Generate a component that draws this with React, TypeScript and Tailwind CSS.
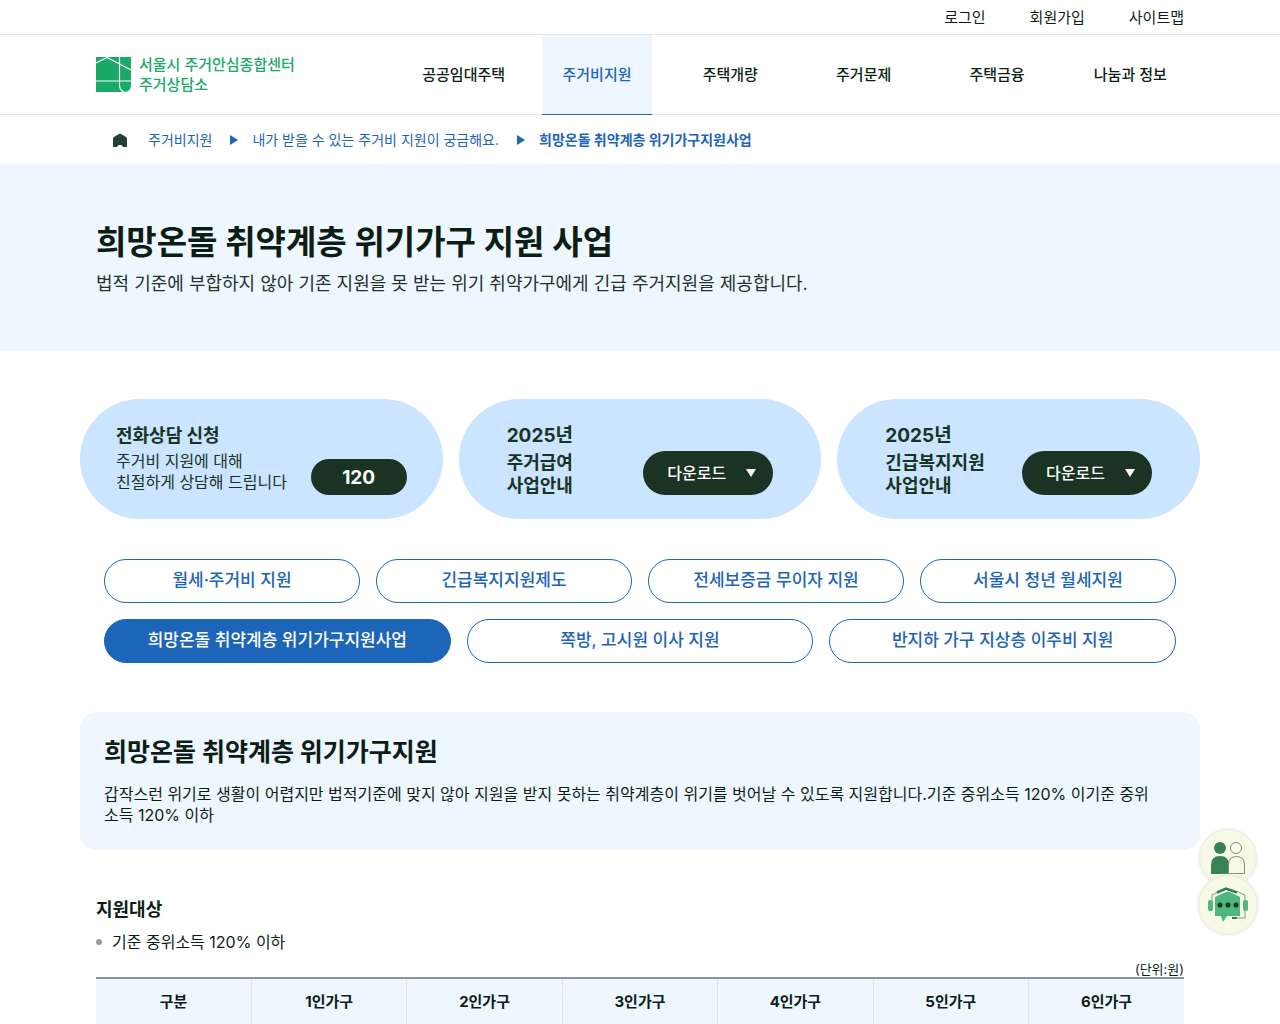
import React from "react";

const nav = [
  { label: "공공임대주택", active: false },
  { label: "주거비지원", active: true },
  { label: "주택개량", active: false },
  { label: "주거문제", active: false },
  { label: "주택금융", active: false },
  { label: "나눔과 정보", active: false },
];
const guides = ["주거급여", "긴급복지지원"];
const topics = ["월세·주거비 지원", "긴급복지지원제도", "전세보증금 무이자 지원", "서울시 청년 월세지원"];
const moreTopics = ["희망온돌 취약계층 위기가구지원사업", "쪽방, 고시원 이사 지원", "반지하 가구 지상층 이주비 지원"];
const columns = ["구분", "1인가구", "2인가구", "3인가구", "4인가구", "5인가구", "6인가구"];

function Logo() {
  return (
    <svg width="35" height="35" viewBox="0 0 35 35" aria-hidden="true">
      <path d="M0 0H35V28Q35 35 28 35H0Z" fill="#1aa968" />
      <path d="M0 6L11 0.5L35 13M23.5 0V28Q23.5 33 28 35M0 24H35" fill="none" stroke="#fff" strokeWidth="1.2" />
    </svg>
  );
}

function Arrow() {
  return (
    <svg width="8" height="10" viewBox="0 0 8 10" aria-hidden="true">
      <path d="M0 0L8 5L0 10Z" fill="#1d65b8" />
    </svg>
  );
}

function Topic({ label, active = false }: { label: string; active?: boolean }) {
  return (
    <a
      href="#topic"
      className={
        "flex h-11 items-center justify-center rounded-full border border-[#1d65b8] text-[17px] font-medium " +
        (active ? "bg-[#1d65b8] text-white" : "bg-white text-[#1d65b8]")
      }
    >
      {label}
    </a>
  );
}

export default function App() {
  return (
    <div className="bg-white font-[Inter,'Noto_Sans_CJK_KR',sans-serif] text-[#0c1e14]">
      <header>
        <div className="border-b border-[#e4e7ea]">
          <div className="mx-auto flex h-[34px] max-w-[1120px] items-center justify-end gap-11 px-4 pt-[2px] text-[15px]">
            <a href="#login">로그인</a>
            <a href="#join">회원가입</a>
            <a href="#sitemap">사이트맵</a>
          </div>
        </div>
        <div className="border-b border-[#e4e7ea]">
          <div className="mx-auto flex h-[79px] max-w-[1120px] items-center justify-between pr-[3px] pl-4">
            <a href="#home" className="flex items-center gap-2 text-[15px] leading-5 font-medium text-[#1aa968]">
              <Logo />
              <span>
                서울시 주거안심종합센터
                <br />
                주거상담소
              </span>
            </a>
            <nav className="grid h-full w-[800px] grid-cols-6">
              {nav.map((n) => (
                <a
                  key={n.label}
                  href="#menu"
                  className={
                    "-mb-px flex items-center justify-center justify-self-center border-b px-5 pt-[2px] text-[15px] font-medium " +
                    (n.active ? "border-[#1d65b8] bg-[#eef6ff] text-[#1d65b8]" : "border-transparent")
                  }
                >
                  {n.label}
                </a>
              ))}
            </nav>
          </div>
        </div>
      </header>

      <nav aria-label="현재 위치" className="mx-auto flex h-[49px] max-w-[1120px] items-center px-8 text-[14px] text-[#1d65b8]">
        <a href="#home" aria-label="홈" className="mr-5">
          <svg width="16" height="16" viewBox="0 0 16 16" aria-hidden="true">
            <path d="M1 6.5Q1 5.5 2 5L7 2Q8 1.5 9 2L14 5Q15 5.500 15 6.500V15H11L9.500 13H6.500L5 15H1Z" fill="#1f4030" />
          </svg>
        </a>
        <a href="#support">주거비지원</a>
        <span className="mr-[14px] ml-[18px]"><Arrow /></span>
        <a href="#guide">내가 받을 수 있는 주거비 지원이 궁금해요.</a>
        <span className="mr-[14px] ml-[18px]"><Arrow /></span>
        <a href="#current" aria-current="page" className="font-bold">희망온돌 취약계층 위기가구지원사업</a>
      </nav>

      <main>
        <div className="bg-[#eef6ff]">
          <div className="mx-auto flex h-[187px] max-w-[1120px] flex-col justify-center px-4 pt-1">
            <h1 className="text-[33px] leading-[48px] font-bold">희망온돌 취약계층 위기가구 지원 사업</h1>
            <p className="text-[18px] leading-9 text-[#23332a]">
              법적 기준에 부합하지 않아 기존 지원을 못 받는 위기 취약가구에게 긴급 주거지원을 제공합니다.
            </p>
          </div>
        </div>

        <div className="mx-auto max-w-[1120px] pt-12">
          <div className="grid grid-cols-3 gap-4">
            <section className="flex h-[120px] items-end justify-between rounded-full bg-[#cbe4ff] px-9 pb-6 text-[#18331f]">
              <div className="pb-[2px]">
                <h2 className="text-[18px] leading-[30px] font-bold">전화상담 신청</h2>
                <p className="text-[16px] leading-[21px]">
                  주거비 지원에 대해
                  <br />
                  친절하게 상담해 드립니다
                </p>
              </div>
              <button type="button" className="h-9 w-24 shrink-0 rounded-full bg-[#1b3322] text-[19px] leading-none font-bold text-white">
                120
              </button>
            </section>
            {guides.map((g) => (
              <section key={g} className="flex h-[120px] items-end justify-between rounded-full bg-[#cbe4ff] px-12 pb-6 text-[#18331f]">
                <h2 className="-mb-[2px] text-[18px] leading-[23px] font-bold">
                  <span className="block text-[19px] leading-[30px]">2025년</span>
                  {g}
                  <br />
                  사업안내
                </h2>
                <button type="button" className="flex h-11 w-[130px] shrink-0 items-center justify-between rounded-full bg-[#1b3322] pr-4 pl-6 text-[16px] font-medium text-white">
                  다운로드
                  <svg width="12" height="8" viewBox="0 0 12 8" aria-hidden="true">
                    <path d="M1 0H11L6 8Z" fill="#fff" />
                  </svg>
                </button>
              </section>
            ))}
          </div>

          <div className="mt-10 flex flex-col gap-4 px-6">
            <div className="grid grid-cols-4 gap-4">
              {topics.map((t) => <Topic key={t} label={t} />)}
            </div>
            <div className="grid grid-cols-3 gap-4">
              {moreTopics.map((t, i) => <Topic key={t} label={t} active={i === 0} />)}
            </div>
          </div>

          <section className="mt-[49px] rounded-2xl bg-[#eef6ff] pt-5 pr-10 pb-6 pl-6">
            <h2 className="text-[25px] leading-10 font-bold">희망온돌 취약계층 위기가구지원</h2>
            <p className="mt-3 text-[16px] leading-[21px]">
              갑작스런 위기로 생활이 어렵지만 법적기준에 맞지 않아 지원을 받지 못하는 취약계층이 위기를 벗어날 수 있도록 지원합니다.기준 중위소득 120% 이기준 중위소득 120% 이하
            </p>
          </section>

          <section className="mt-11 px-4">
            <h3 className="text-[18px] leading-8 font-bold">지원대상</h3>
            <ul className="mb-[3px]">
              <li className="flex items-center gap-[10px] text-[16px] leading-8">
                <span className="size-[6px] rounded-full bg-[#9a9a9a]" />
                기준 중위소득 120% 이하
              </li>
            </ul>
            <table className="w-full table-fixed border-collapse">
              <caption className="text-right text-[13px] leading-4">(단위:원)</caption>
              <thead>
                <tr>
                  {columns.map((c) => (
                    <th key={c} scope="col" className="h-12 border-t-2 border-r border-t-[#8f959b] border-r-[#dfe6ee] bg-[#eef6ff] text-[15px] font-bold last:border-r-0">
                      {c}
                    </th>
                  ))}
                </tr>
              </thead>
            </table>
          </section>
        </div>
      </main>

      <aside className="fixed right-[23px] bottom-[90px] flex flex-col items-center">
        <button type="button" aria-label="상담" className="flex size-14 items-center justify-center rounded-full bg-[#f6f9e6] shadow-[0_0_3px_1px_#e2e5dc]">
          <svg width="36" height="34" viewBox="0 0 36 34" aria-hidden="true">
            <circle cx="10" cy="7" r="6" fill="#388258" />
            <path d="M1 33V24Q1 15 10 15T19 24V33Z" fill="#388258" />
            <circle cx="26" cy="7" r="5.500" fill="none" stroke="#7d8f76" />
            <path d="M18.500 32.500V24Q18.500 15.500 26.500 15.500T34.500 24V32.500Z" fill="#f6f9e6" stroke="#7d8f76" />
          </svg>
        </button>
        <button type="button" aria-label="챗봇" className="-mt-[10px] flex size-[58px] items-center justify-center rounded-full bg-[#f6f9e6] shadow-[0_0_3px_1px_#e2e5dc]">
          <svg width="40" height="36" viewBox="0 0 40 36" aria-hidden="true">
            <rect x="0" y="13" width="5" height="11" rx="2" fill="#4fb67d" />
            <rect x="35" y="13" width="5" height="11" rx="2" fill="#4fb67d" />
            <path d="M7 10L18 5Q20 4 22 5L32 10V29H19L15 35L13 29H7Z" fill="#4fb67d" />
            <path d="M4 13V8L9 5.500M29 4.500L37 8V31H25" fill="none" stroke="#6fa887" />
            <path d="M9 5.500L18 1.500L29 5.500" fill="none" stroke="#2f7f55" strokeWidth="2.500" />
            <path d="M24 31H29" stroke="#2f7f55" strokeWidth="2" />
            <circle cx="12" cy="18" r="2.500" fill="#173322" />
            <circle cx="20" cy="18" r="2.500" fill="#173322" />
            <circle cx="28" cy="18" r="2.500" fill="#173322" />
          </svg>
        </button>
      </aside>
    </div>
  );
}
